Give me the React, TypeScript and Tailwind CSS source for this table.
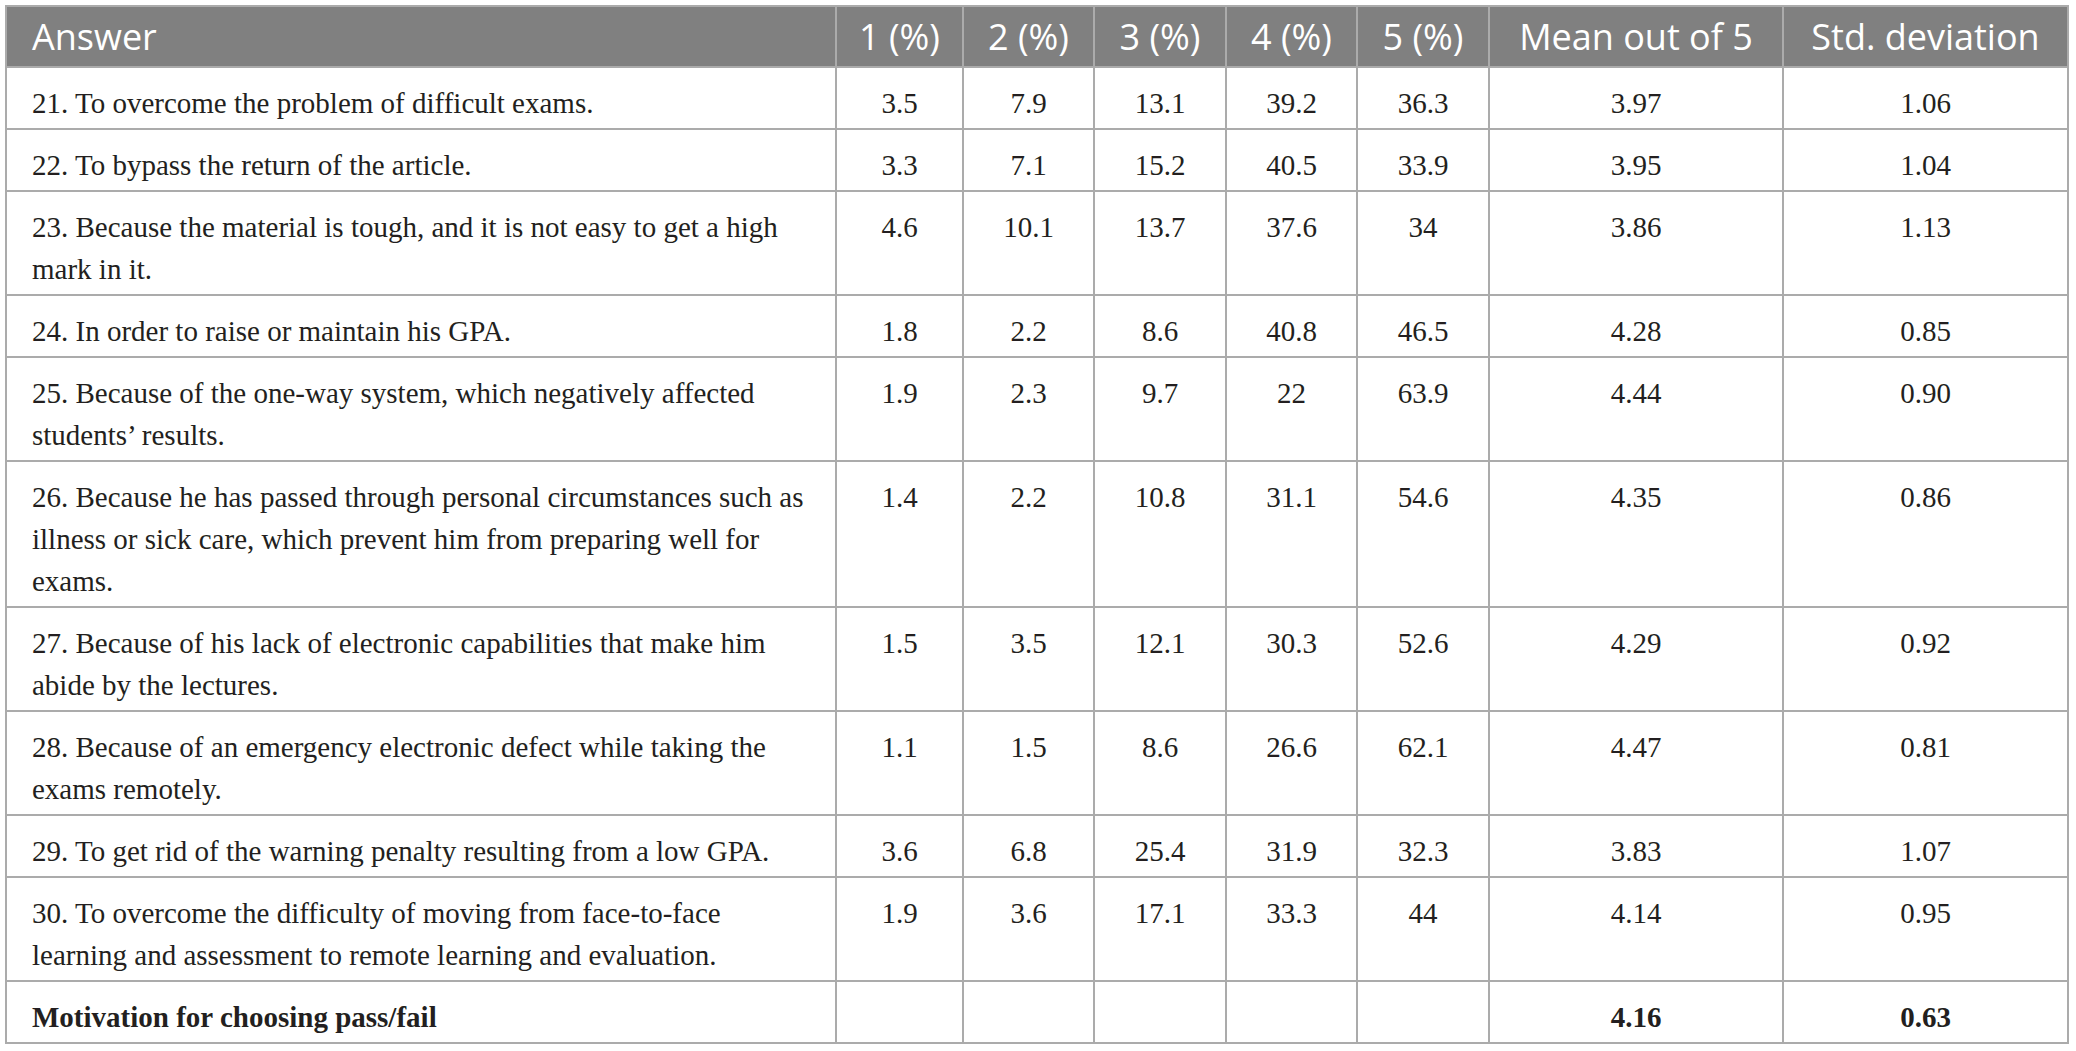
import React from "react";

type Row = {
  answer: string[];
  values: string[];
  bold?: boolean;
};

const headers = ["1 (%)", "2 (%)", "3 (%)", "4 (%)", "5 (%)", "Mean out of 5", "Std. deviation"];

const rows: Row[] = [
  { answer: ["21. To overcome the problem of difficult exams."], values: ["3.5", "7.9", "13.1", "39.2", "36.3", "3.97", "1.06"] },
  { answer: ["22. To bypass the return of the article."], values: ["3.3", "7.1", "15.2", "40.5", "33.9", "3.95", "1.04"] },
  {
    answer: ["23. Because the material is tough, and it is not easy to get a high", "mark in it."],
    values: ["4.6", "10.1", "13.7", "37.6", "34", "3.86", "1.13"],
  },
  { answer: ["24. In order to raise or maintain his GPA."], values: ["1.8", "2.2", "8.6", "40.8", "46.5", "4.28", "0.85"] },
  {
    answer: ["25. Because of the one-way system, which negatively affected", "students\u2019 results."],
    values: ["1.9", "2.3", "9.7", "22", "63.9", "4.44", "0.90"],
  },
  {
    answer: [
      "26. Because he has passed through personal circumstances such as",
      "illness or sick care, which prevent him from preparing well for",
      "exams.",
    ],
    values: ["1.4", "2.2", "10.8", "31.1", "54.6", "4.35", "0.86"],
  },
  {
    answer: ["27. Because of his lack of electronic capabilities that make him", "abide by the lectures."],
    values: ["1.5", "3.5", "12.1", "30.3", "52.6", "4.29", "0.92"],
  },
  {
    answer: ["28. Because of an emergency electronic defect while taking the", "exams remotely."],
    values: ["1.1", "1.5", "8.6", "26.6", "62.1", "4.47", "0.81"],
  },
  { answer: ["29. To get rid of the warning penalty resulting from a low GPA."], values: ["3.6", "6.8", "25.4", "31.9", "32.3", "3.83", "1.07"] },
  {
    answer: ["30. To overcome the difficulty of moving from face-to-face", "learning and assessment to remote learning and evaluation."],
    values: ["1.9", "3.6", "17.1", "33.3", "44", "4.14", "0.95"],
  },
  { answer: ["Motivation for choosing pass/fail"], values: ["", "", "", "", "", "4.16", "0.63"], bold: true },
];

export default function App() {
  return (
    <div className="min-h-screen bg-white pl-[5px] pt-[5px]">
      <table className="table-fixed border-collapse border-2 border-[#ababab] w-[2062px]">
        <colgroup>
          <col className="w-[830px]" />
          <col className="w-[127px]" />
          <col className="w-[131px]" />
          <col className="w-[132px]" />
          <col className="w-[131px]" />
          <col className="w-[132px]" />
          <col className="w-[294px]" />
          <col className="w-[285px]" />
        </colgroup>
        <thead>
          <tr className="bg-[#808080] text-white font-['Open_Sans',sans-serif] text-[36px] leading-[41px]">
            <th className="h-[61px] border-2 border-[#ababab] pl-[25px] text-left font-normal align-middle">Answer</th>
            {headers.map((h) => (
              <th key={h} className="h-[61px] border-2 border-[#ababab] text-center font-normal align-middle whitespace-nowrap">
                {h}
              </th>
            ))}
          </tr>
        </thead>
        <tbody className="font-['Liberation_Serif',serif] text-[29px] leading-[42px] text-[#231f20]">
          {rows.map((r, i) => (
            <tr key={i} className={r.bold ? "font-bold" : ""}>
              <td className="border-2 border-[#ababab] pl-[25px] pr-2 pt-[14px] pb-[4px] align-top">
                {r.answer.map((line, j) => (
                  <span key={j} className="block whitespace-nowrap">
                    {line}
                  </span>
                ))}
              </td>
              {r.values.map((v, j) => (
                <td key={j} className="border-2 border-[#ababab] pt-[14px] pb-[4px] text-center align-top">
                  {v}
                </td>
              ))}
            </tr>
          ))}
        </tbody>
      </table>
    </div>
  );
}
